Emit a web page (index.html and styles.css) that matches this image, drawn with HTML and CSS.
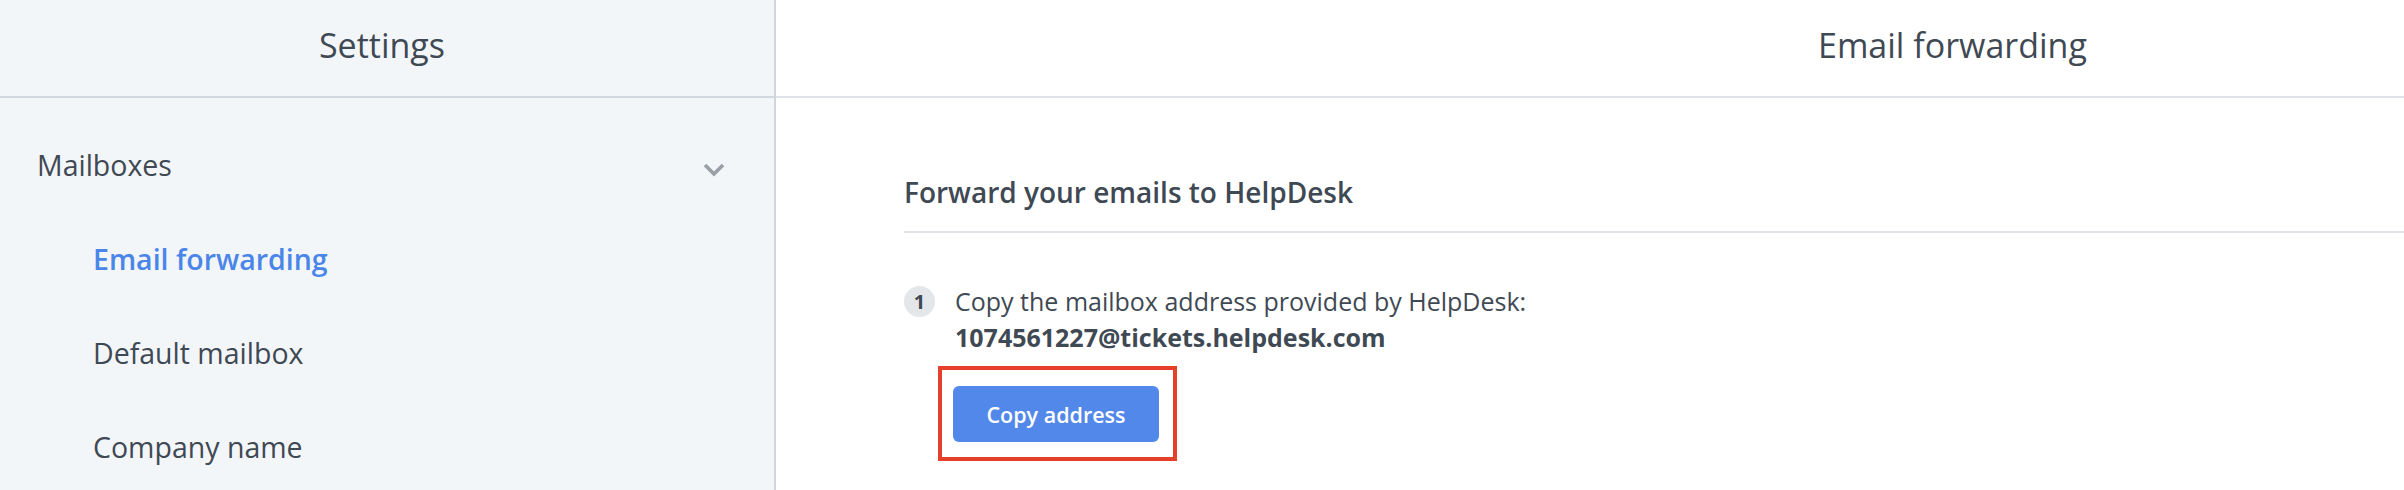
FILE: index.html
```html
<!DOCTYPE html>
<html lang="en">
<head>
  <meta charset="UTF-8">
  <meta name="viewport" content="width=device-width, initial-scale=1.0">
  <title>Settings - Email forwarding</title>
  <link rel="stylesheet" href="styles.css">
</head>
<body>
<div class="layout">
  <aside class="sidebar">
    <header class="sidebar-header">Settings</header>
    <nav class="sidebar-nav">
      <div class="nav-group">
        <span>Mailboxes</span>
        <svg class="chevron" width="22" height="14" viewBox="0 0 22 14">
          <polyline points="2,2 11,11 20,2" fill="none" stroke="#9a9fa5" stroke-width="3.6"/>
        </svg>
      </div>
      <a class="nav-item active" href="#">Email forwarding</a>
      <a class="nav-item" href="#">Default mailbox</a>
      <a class="nav-item" href="#">Company name</a>
    </nav>
  </aside>
  <main class="main">
    <header class="main-header">Email forwarding</header>
    <section class="content">
      <h2 class="section-title">Forward your emails to HelpDesk</h2>
      <div class="step">
        <span class="step-num">1</span>
        <div class="step-body">
          <div>Copy the mailbox address provided by HelpDesk:</div>
          <div class="address">1074561227@tickets.helpdesk.com</div>
          <div class="highlight">
            <button class="copy-btn">Copy address</button>
          </div>
        </div>
      </div>
    </section>
  </main>
</div>
</body>
</html>
```

FILE: styles.css
```css
body {
  margin: 0;
  overflow: hidden;
  font-family: 'Open Sans', 'Noto Sans', sans-serif;
  color: #3f4954;
  background: #fff;
}
.layout {
  display: flex;
  height: 490px;
}
.sidebar {
  width: 774px;
  flex-shrink: 0;
  background-color: #f3f6f9;
  border-right: 2px solid #cfd5dd;
}
.sidebar-header {
  display: flex;
  align-items: center;
  justify-content: center;
  padding-right: 10px;
  padding-bottom: 6px;
  box-sizing: border-box;
  height: 98px;
  border-bottom: 2px solid #d2d8df;
  font-size: 34px;
}
.sidebar-nav {
  padding-top: 20px;
}
.nav-group {
  display: flex;
  justify-content: space-between;
  align-items: center;
  padding: 0 49px 0 37px;
  font-size: 28.5px;
  line-height: 94px;
}
.chevron {
  margin-top: 10px;
}
.nav-item {
  display: block;
  padding-left: 93px;
  font-size: 28.5px;
  line-height: 94px;
  color: #3f4954;
  text-decoration: none;
}
.nav-item.active {
  color: #4a85ea;
  font-weight: 600;
}
.main {
  flex: 1;
}
.main-header {
  height: 98px;
  box-sizing: border-box;
  display: flex;
  align-items: center;
  padding-left: 1042px;
  padding-bottom: 6px;
  border-bottom: 2px solid #dfe3e7;
  font-size: 34px;
}
.content {
  padding-left: 128px;
}
.section-title {
  margin: 76px 0 0;
  padding-bottom: 21px;
  border-bottom: 2px solid #dfe3e7;
  font-size: 28px;
  font-weight: 600;
  line-height: 36px;
}
.step {
  display: flex;
  margin-top: 50px;
  font-size: 25px;
  line-height: 36px;
}
.step-num {
  width: 31px;
  height: 31px;
  margin: 3px 20px 0 0;
  border-radius: 50%;
  background-color: #e4e6e9;
  font-size: 20px;
  font-weight: 700;
  line-height: 31px;
  text-align: center;
  flex-shrink: 0;
}
.address {
  font-weight: 700;
}
.highlight {
  display: inline-block;
  margin: 11px 0 0 -17px;
  padding: 16px 14px 15px 11px;
  border: 4px solid #e5402a;
}
.copy-btn {
  display: block;
  width: 206px;
  height: 56px;
  border: none;
  border-radius: 6px;
  background-color: #5288e9;
  color: #fff;
  font-family: 'Open Sans', 'Noto Sans', sans-serif;
  font-size: 21.5px;
  font-weight: 600;
  cursor: pointer;
}
```
